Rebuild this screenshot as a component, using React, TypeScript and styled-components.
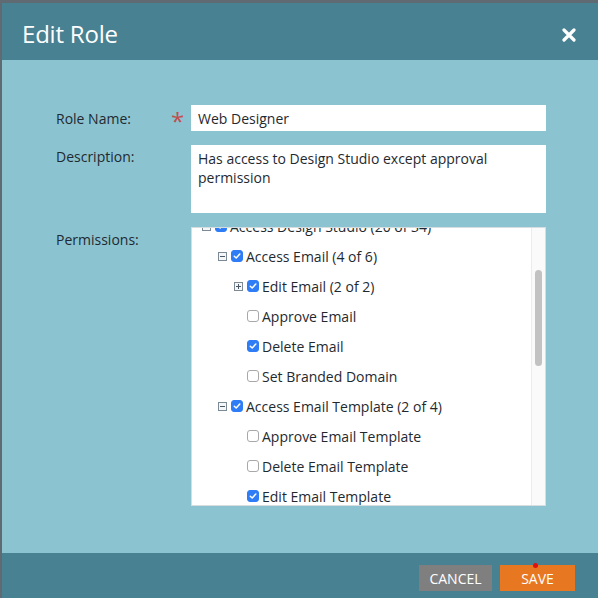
import { useLayoutEffect, useRef } from "react";
import styled, { createGlobalStyle } from "styled-components";

const GlobalStyle = createGlobalStyle`
  html, body {
    margin: 0;
    padding: 0;
    background: #5f6a73;
  }
  body {
    font-family: "Open Sans", "Liberation Sans", sans-serif;
  }
`;

const Page = styled.div`
  width: 598px;
  height: 598px;
  overflow: hidden;
  background: #5f6a73;
  padding: 3px 0 0 2px;
  box-sizing: border-box;
`;

const Dialog = styled.div`
  width: 596px;
  height: 595px;
  display: flex;
  flex-direction: column;
`;

const Header = styled.div`
  height: 57px;
  background: #478192;
  display: flex;
  align-items: center;
  justify-content: space-between;
  padding: 0 20px 0 20px;
  flex-shrink: 0;
`;

const Title = styled.h1`
  margin: 0;
  font-size: 24px;
  font-weight: 400;
  color: #ffffff;
  letter-spacing: -0.2px;
  padding-top: 4px;
`;

const Close = styled.button`
  border: none;
  background: transparent;
  padding: 0;
  width: 18px;
  height: 18px;
  display: flex;
  align-items: center;
  justify-content: center;
  cursor: pointer;
  margin-top: 6px;
`;

const Body = styled.div`
  flex: 1;
  background: #8bc3d1;
  padding: 45px 0 0 54px;
`;

const Form = styled.div`
  display: grid;
  grid-template-columns: 115px 20px 355px;
  row-gap: 14px;
  align-items: start;
`;

const Label = styled.div<{ $top: number }>`
  font-size: 14px;
  color: #1f2a30;
  padding-top: ${(p) => p.$top}px;
`;

const Star = styled.div`
  color: #c0504d;
  font-size: 24px;
  line-height: 26px;
  height: 26px;
  overflow: hidden;
  padding-top: 3px;
  box-sizing: border-box;
`;

const TextInput = styled.div`
  height: 26px;
  background: #ffffff;
  font-size: 14px;
  color: #1f2a30;
  padding: 0 7px;
  display: flex;
  align-items: center;
  box-sizing: border-box;
`;

const TextArea = styled.div`
  height: 68px;
  background: #ffffff;
  font-size: 14px;
  line-height: 19px;
  color: #1f2a30;
  padding: 4px 7px;
  box-sizing: border-box;
`;

const Tree = styled.div`
  height: 279px;
  background: #ffffff;
  border: 1px solid #d6dde0;
  box-sizing: border-box;
  display: flex;
`;

const Viewport = styled.div`
  flex: 1;
  overflow: hidden;
`;

const TreeList = styled.div`
  padding: 17px 0 2px 0;
`;

const ScrollTrack = styled.div`
  width: 14px;
  flex-shrink: 0;
  background: #fafafa;
  border-left: 1px solid #ececec;
  box-sizing: border-box;
  padding: 0 3px 0 3px;
`;

const ScrollThumb = styled.div`
  height: 96px;
  border-radius: 4px;
  background: #c2c2c2;
`;

const Row = styled.div<{ $level: number }>`
  height: 30px;
  display: flex;
  align-items: center;
  padding-left: ${(p) => 10 + p.$level * 16}px;
  font-size: 14px;
  color: #1f2a30;
  white-space: nowrap;
`;

const Toggle = styled.span`
  width: 9px;
  height: 9px;
  border: 1px solid #7c8a96;
  box-sizing: border-box;
  position: relative;
  margin-right: 4px;
  flex-shrink: 0;
  background: #f4f6f8;

  &::before {
    content: "";
    position: absolute;
    left: 1px;
    right: 1px;
    top: 3px;
    height: 1px;
    background: #4b5966;
  }
`;

const PlusToggle = styled(Toggle)`
  &::after {
    content: "";
    position: absolute;
    top: 1px;
    bottom: 1px;
    left: 3px;
    width: 1px;
    background: #4b5966;
  }
`;

const Spacer = styled.span`
  width: 13px;
  flex-shrink: 0;
`;

const Box = styled.span<{ $checked: boolean }>`
  width: 12px;
  height: 12px;
  border-radius: 3px;
  box-sizing: border-box;
  margin-right: 3px;
  flex-shrink: 0;
  display: flex;
  align-items: center;
  justify-content: center;
  background: ${(p) => (p.$checked ? "#2f7df6" : "#ffffff")};
  border: 1px solid ${(p) => (p.$checked ? "#2f7df6" : "#a8a8a8")};
`;

const Footer = styled.div`
  height: 45px;
  background: #478192;
  flex-shrink: 0;
  display: flex;
  justify-content: flex-end;
  align-items: flex-start;
  gap: 8px;
  padding: 12px 23px 0 0;
  box-sizing: border-box;
`;

const Button = styled.button<{ $primary?: boolean }>`
  height: 26px;
  border: none;
  padding: 0;
  width: ${(p) => (p.$primary ? 75 : 73)}px;
  background: ${(p) => (p.$primary ? "#e87722" : "#7f7f7f")};
  color: #ffffff;
  font-family: "Open Sans", "Liberation Sans", sans-serif;
  font-size: 14px;
  text-transform: uppercase;
  position: relative;
  cursor: pointer;
`;

const Dot = styled.span`
  position: absolute;
  top: -2px;
  left: 33px;
  width: 5px;
  height: 5px;
  border-radius: 50%;
  background: #e01010;
`;

type Node = { label: string; level: number; checked: boolean; toggle?: "minus" | "plus" };

const nodes: Node[] = [
  { label: "Access Admin (0 of 12)", level: 0, checked: false, toggle: "plus" },
  { label: "Access Analytics (3 of 8)", level: 0, checked: true, toggle: "plus" },
  { label: "Access Database (2 of 6)", level: 0, checked: true, toggle: "plus" },
  { label: "Access Design Studio (20 of 34)", level: 0, checked: true, toggle: "minus" },
  { label: "Access Email (4 of 6)", level: 1, checked: true, toggle: "minus" },
  { label: "Edit Email (2 of 2)", level: 2, checked: true, toggle: "plus" },
  { label: "Approve Email", level: 2, checked: false },
  { label: "Delete Email", level: 2, checked: true },
  { label: "Set Branded Domain", level: 2, checked: false },
  { label: "Access Email Template (2 of 4)", level: 1, checked: true, toggle: "minus" },
  { label: "Approve Email Template", level: 2, checked: false },
  { label: "Delete Email Template", level: 2, checked: false },
  { label: "Edit Email Template", level: 2, checked: true },
  { label: "Unapprove Email Template", level: 2, checked: false },
  { label: "Access Form (3 of 4)", level: 1, checked: true, toggle: "minus" },
  { label: "Approve Form", level: 2, checked: false },
  { label: "Delete Form", level: 2, checked: true },
  { label: "Edit Form", level: 2, checked: true },
  { label: "Unapprove Form", level: 2, checked: true },
  { label: "Access Image and File (3 of 3)", level: 1, checked: true, toggle: "plus" },
  { label: "Access Landing Page (4 of 6)", level: 1, checked: true, toggle: "minus" },
  { label: "Approve Landing Page", level: 2, checked: false },
  { label: "Delete Landing Page", level: 2, checked: true },
  { label: "Edit Landing Page", level: 2, checked: true },
  { label: "Unapprove Landing Page", level: 2, checked: false },
  { label: "Access Snippet (2 of 4)", level: 1, checked: true, toggle: "plus" },
];

const SCROLL_TOP = 124;

function Check() {
  return (
    <svg width="8" height="8" viewBox="0 0 8 8">
      <path d="M1.3 4.2 L3.2 6 L6.8 2" fill="none" stroke="#ffffff" strokeWidth="1.5" strokeLinecap="round" strokeLinejoin="round" />
    </svg>
  );
}

function TreeRow({ node }: { node: Node }) {
  return (
    <Row $level={node.level}>
      {node.toggle === "minus" ? <Toggle /> : node.toggle === "plus" ? <PlusToggle /> : <Spacer />}
      <Box $checked={node.checked}>{node.checked && <Check />}</Box>
      {node.label}
    </Row>
  );
}

export default function App() {
  const viewRef = useRef<HTMLDivElement>(null);

  useLayoutEffect(() => {
    if (viewRef.current) viewRef.current.scrollTop = SCROLL_TOP;
  }, []);

  return (
    <Page>
      <GlobalStyle />
      <Dialog>
        <Header>
          <Title>Edit Role</Title>
          <Close aria-label="Close">
            <svg width="14" height="14" viewBox="0 0 14 14">
              <path d="M2 2 L12 12 M12 2 L2 12" stroke="#ffffff" strokeWidth="3.2" strokeLinecap="round" />
            </svg>
          </Close>
        </Header>
        <Body>
          <Form>
            <Label $top={4}>Role Name:</Label>
            <Star>*</Star>
            <TextInput>Web Designer</TextInput>

            <Label $top={2}>Description:</Label>
            <div />
            <TextArea>Has access to Design Studio except approval permission</TextArea>

            <Label $top={3}>Permissions:</Label>
            <div />
            <Tree>
              <Viewport ref={viewRef}>
                <TreeList>
                  {nodes.map((n) => (
                    <TreeRow key={n.label} node={n} />
                  ))}
                </TreeList>
              </Viewport>
              <ScrollTrack>
                <ScrollThumb style={{ marginTop: 42 }} />
              </ScrollTrack>
            </Tree>
          </Form>
        </Body>
        <Footer>
          <Button>Cancel</Button>
          <Button $primary>
            <Dot />
            Save
          </Button>
        </Footer>
      </Dialog>
    </Page>
  );
}
